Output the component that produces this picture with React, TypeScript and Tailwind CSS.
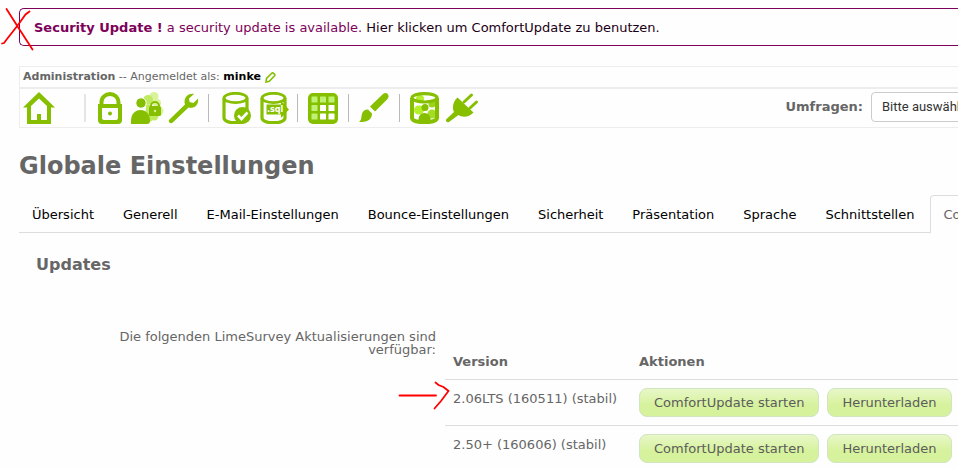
import type { ReactNode } from "react";

const G = "#86be00";

const tabs = [
  "Übersicht",
  "Generell",
  "E-Mail-Einstellungen",
  "Bounce-Einstellungen",
  "Sicherheit",
  "Präsentation",
  "Sprache",
  "Schnittstellen",
  "ComfortUpdate",
];

const versions = ["2.06LTS (160511) (stabil)", "2.50+ (160606) (stabil)"];

function Tool({ label, children }: { label: string; children: ReactNode }) {
  return (
    <a href="#" aria-label={label} className="block shrink-0">
      <svg width="34" height="32" viewBox="0 0 34 32" fill="none">
        {children}
      </svg>
    </a>
  );
}

function Separator() {
  return <span className="h-7 w-px shrink-0 bg-[#b9b9b9]" />;
}

function HomeIcon() {
  return (
    <Tool label="Startseite">
      <path fill={G} fillRule="evenodd" d="M16 0 32 15.500h-4V32H4V15.500H0ZM8 14v14h6v-6h4v6h6V14l-8-7.500Z" />
    </Tool>
  );
}

function LockIcon() {
  return (
    <Tool label="Benutzerverwaltung">
      <path d="M7.500 15V10a8.500 8 0 0 1 17 0v5" stroke={G} strokeWidth="4" />
      <path fill={G} fillRule="evenodd" d="M4 12h24v16a4 4 0 0 1-4 4H8a4 4 0 0 1-4-4ZM8 16v10a2 2 0 0 0 2 2h12a2 2 0 0 0 2-2V16Z" />
      <circle cx="16" cy="21.500" r="2" fill={G} />
    </Tool>
  );
}

function GroupsIcon() {
  return (
    <Tool label="Benutzergruppen">
      <g fill="#d8f39b">
        <circle cx="23" cy="4.500" r="4.500" />
        <circle cx="28" cy="19" r="4.500" />
        <circle cx="26" cy="11" r="4" />
      </g>
      <g fill="#c0eb60">
        <circle cx="17" cy="8" r="5" />
        <path d="M15 13h6v16l-4 1h-3Z" />
        <circle cx="23" cy="24" r="4.500" />
      </g>
      <circle cx="10" cy="11" r="5.200" fill={G} stroke="#fefefe" />
      <path d="M0 32v-3c0-7 4-11 9.500-11S19 22 19 29c0 2-1 3-3 3Z" fill={G} />
      <path d="M20 18v-4a4 4 0 0 1 8 0v4" stroke={G} strokeWidth="2" />
      <rect x="18" y="14" width="12" height="10" rx="1.500" fill={G} />
      <circle cx="24" cy="19" r="1.200" fill="#d8f39b" />
    </Tool>
  );
}

function WrenchIcon() {
  return (
    <Tool label="Globale Einstellungen">
      <path
        fill={G}
        d="M26 2c-6-1-11 4-9 10.500L1.500 27.500c-2.200 2.200 1 5 3.300 3L20.500 15.500c6 1.500 10.500-3 9.500-9L25.500 11 21.500 10l-.5-3.500Z"
      />
    </Tool>
  );
}

function Cylinder() {
  return (
    <>
      <ellipse cx="14.500" cy="6" rx="11.500" ry="4.700" stroke={G} strokeWidth="2.800" />
      <path d="M3 6v20c0 2.800 5 4.700 11.500 4.700S26 28.800 26 26V6" stroke={G} strokeWidth="3.200" />
    </>
  );
}

function CheckDataIcon() {
  return (
    <Tool label="Datenintegrität prüfen">
      <Cylinder />
      <circle cx="21.500" cy="23.500" r="8.500" fill={G} />
      <path d="m17 23.500 3.500 3.500 6-6.500" stroke="white" strokeWidth="2.600" />
    </Tool>
  );
}

function SqlIcon() {
  return (
    <Tool label="Datenbank sichern">
      <Cylinder />
      <path d="M7.500 12.500H22V9l8 8.500-8 8.500v-3.500H7.500Z" fill={G} />
      <text x="8" y="20" fill="white" className="font-['DejaVu_Sans'] text-[8px] font-bold">
        .sql
      </text>
    </Tool>
  );
}

function GridIcon() {
  const cells = [4, 12, 20];
  return (
    <Tool label="Beschriftungssätze">
      <rect x="0" y="1" width="30" height="31" rx="5" fill={G} />
      {cells.map((y, row) =>
        cells.map((x, col) => (
          <rect
            key={`${x}-${y}`}
            x={x - 0.500 + col * 0.500}
            y={y + 0.500 + row * 0.500}
            width="6"
            height="6"
            rx="0.500"
            fill={row === 0 || col === 0 ? "#bdf274" : "white"}
          />
        )),
      )}
    </Tool>
  );
}

function BrushIcon() {
  return (
    <Tool label="Vorlagen-Editor">
      <path d="M24 2c3.500-3 7.500 1.500 4.500 5L16 19.500 11 14.500Z" fill={G} />
      <path d="M9 17.500 13 21.500c0 5-4 9.500-13 8.300 3-1.500 2-5 3-8 .8-2.800 3-4.300 6-4.300Z" fill={G} />
    </Tool>
  );
}

function ParticipantsIcon() {
  return (
    <Tool label="Zentrale Teilnehmerverwaltung">
      <circle cx="10" cy="7" r="4" fill="#b5f12a" />
      <ellipse cx="9" cy="18" rx="5" ry="4.500" fill="#b5f12a" />
      <circle cx="22" cy="12" r="3.500" fill="#9cd31b" />
      <circle cx="22" cy="22" r="4.500" fill="#a5dc25" />
      <circle cx="15" cy="15.500" r="3.500" fill={G} />
      <path d="M8.500 30v-3c0-3 2.500-6 6-6s6 3 6 6v3Z" fill={G} />
      <ellipse cx="14.500" cy="5.800" rx="12.500" ry="4.200" stroke={G} strokeWidth="3.200" />
      <path d="M2 6v20c0 2.500 5 4.200 12.500 4.200S27 28.500 27 26V6" stroke={G} strokeWidth="4" />
    </Tool>
  );
}

function PlugIcon() {
  return (
    <Tool label="Erweiterungen">
      <path d="m18 10 7.500-7M24 16l6.500-6" stroke={G} strokeWidth="3" strokeLinecap="round" />
      <path d="M11.500 5.500 27.500 20.500c-4 4.500-11 5.500-15 2.500L3 30c-2 1-4-1-2.500-3L8 20C5.500 15.500 7.500 9 11.500 5.500Z" fill={G} />
    </Tool>
  );
}

function ActionButton({ children }: { children: ReactNode }) {
  return (
    <button
      type="button"
      className="h-[29px] shrink-0 whitespace-nowrap rounded-lg border border-[#d0e5c0] bg-linear-to-b from-[#e8f7c8] to-[#d6f29c] to-60% px-3.5 text-[13px] leading-5 text-[#5c5c5c]"
    >
      {children}
    </button>
  );
}

export default function App() {
  return (
    <div className="relative h-screen overflow-hidden bg-[#fefefe] pt-2 pl-[19px] font-['DejaVu_Sans',Verdana,sans-serif] text-[13px] leading-5 text-[#666]">
      <div
        role="alert"
        className="h-[38px] rounded-l-[5px] border border-r-0 border-[#7d0059] px-[14px] py-[9px] text-[#7d0059]"
      >
        <strong>Security Update !</strong> a security update is available.{" "}
        <a href="#" className="text-[#1b0015]">
          Hier klicken um ComfortUpdate zu benutzen.
        </a>
      </div>

      <header className="mt-5 border border-r-0 border-[#ededed]">
        <div className="flex h-5 items-center gap-1 px-[3px] text-[11px]">
          <p className="whitespace-pre">
            <strong>Administration</strong> -- Angemeldet als:{" "}
            <a href="#" className="font-bold text-black">
              minke
            </a>
          </p>
          <a href="#" aria-label="Profil bearbeiten">
            <svg width="11" height="11" viewBox="0 0 11 11" fill="none" stroke={G} strokeWidth="1.600">
              <path d="M1 10 1.500 6.500 6.800 1.200c1-1 3.800 1.200 2.800 2.600L4.300 9.200Z" />
            </svg>
          </a>
        </div>
        <div className="flex h-10 items-center border-t-2 border-[#ededed] pl-[3px]">
          <HomeIcon />
          <span className="mr-2 ml-[27px] h-7 w-0.5 shrink-0 bg-[#e5e5e5]" />
          <div className="flex gap-[3px]">
            <LockIcon />
            <GroupsIcon />
            <WrenchIcon />
          </div>
          <div className="mr-3 ml-1.5 flex">
            <Separator />
          </div>
          <div className="flex gap-1">
            <CheckDataIcon />
            <SqlIcon />
          </div>
          <div className="mr-2.5 ml-1 flex">
            <Separator />
          </div>
          <GridIcon />
          <div className="mr-2.5 ml-1.5 flex">
            <Separator />
          </div>
          <BrushIcon />
          <div className="mr-2.5 ml-1.5 flex">
            <Separator />
          </div>
          <div className="flex gap-0.5">
            <ParticipantsIcon />
            <PlugIcon />
          </div>
          <div className="-mr-32 ml-auto flex shrink-0 items-center gap-2 pb-0.5">
            <label htmlFor="survey" className="font-bold">
              Umfragen:
            </label>
            <select
              id="survey"
              className="h-[30px] w-[215px] appearance-none rounded border border-[#ccc] bg-white px-2.5 font-[Roboto,sans-serif] text-[13px] text-[#333]"
            >
              <option>Bitte auswählen...</option>
            </select>
          </div>
        </div>
      </header>

      <h1 className="mt-[18px] text-2xl leading-10 font-bold">Globale Einstellungen</h1>

      <nav className="mt-[9px] flex h-[38px] gap-[3px] border-b border-[#ddd]">
        {tabs.map((tab) => (
          <a
            key={tab}
            href="#"
            className={
              tab === "ComfortUpdate"
                ? "h-[38px] shrink-0 rounded-t border border-b-0 border-[#ddd] bg-[#fefefe] px-3 py-[9px] text-[#666]"
                : "h-[38px] shrink-0 border border-b-0 border-transparent px-3 py-[9px] text-black"
            }
          >
            {tab}
          </a>
        ))}
      </nav>

      <main className="pl-[17px]">
        <h2 className="mt-5 text-base leading-6 font-bold">Updates</h2>
        <div className="mt-[53px] flex gap-[9px]">
          <p className="w-[400px] shrink-0 pl-[70px] text-right leading-[13px]">
            Die folgenden LimeSurvey Aktualisierungen sind verfügbar:
          </p>
          <table className="mt-[13px] flex-1 border-collapse text-left">
            <thead>
              <tr>
                <th className="w-[186px] min-w-[186px] px-2 pt-[9px] pb-[7px]">Version</th>
                <th className="px-2 pt-[9px] pb-[7px]">Aktionen</th>
              </tr>
            </thead>
            <tbody>
              {versions.map((version) => (
                <tr key={version} className="border-t border-[#ddd] align-top">
                  <td className="px-2 pt-[9px] whitespace-nowrap">{version}</td>
                  <td className="p-2">
                    <div className="flex gap-2">
                      <ActionButton>ComfortUpdate starten</ActionButton>
                      <ActionButton>Herunterladen</ActionButton>
                    </div>
                  </td>
                </tr>
              ))}
            </tbody>
          </table>
        </div>
      </main>

      <svg
        className="pointer-events-none absolute top-0 left-0"
        width="460"
        height="420"
        viewBox="0 0 460 420"
        fill="none"
        stroke="#ff0000"
        strokeWidth="1.800"
        strokeLinecap="round"
        aria-hidden="true"
      >
        <path d="M6.500 9 17 25.500 27 41l5.500 8.500M29.500 11.500l-4 3L18 25 7 39l-3 4-2 .5" />
        <path d="M399.500 395.500H436M435.500 382.500l3 2.500 5 2 5 4L441 401l-6.500 7.500" />
      </svg>
    </div>
  );
}
